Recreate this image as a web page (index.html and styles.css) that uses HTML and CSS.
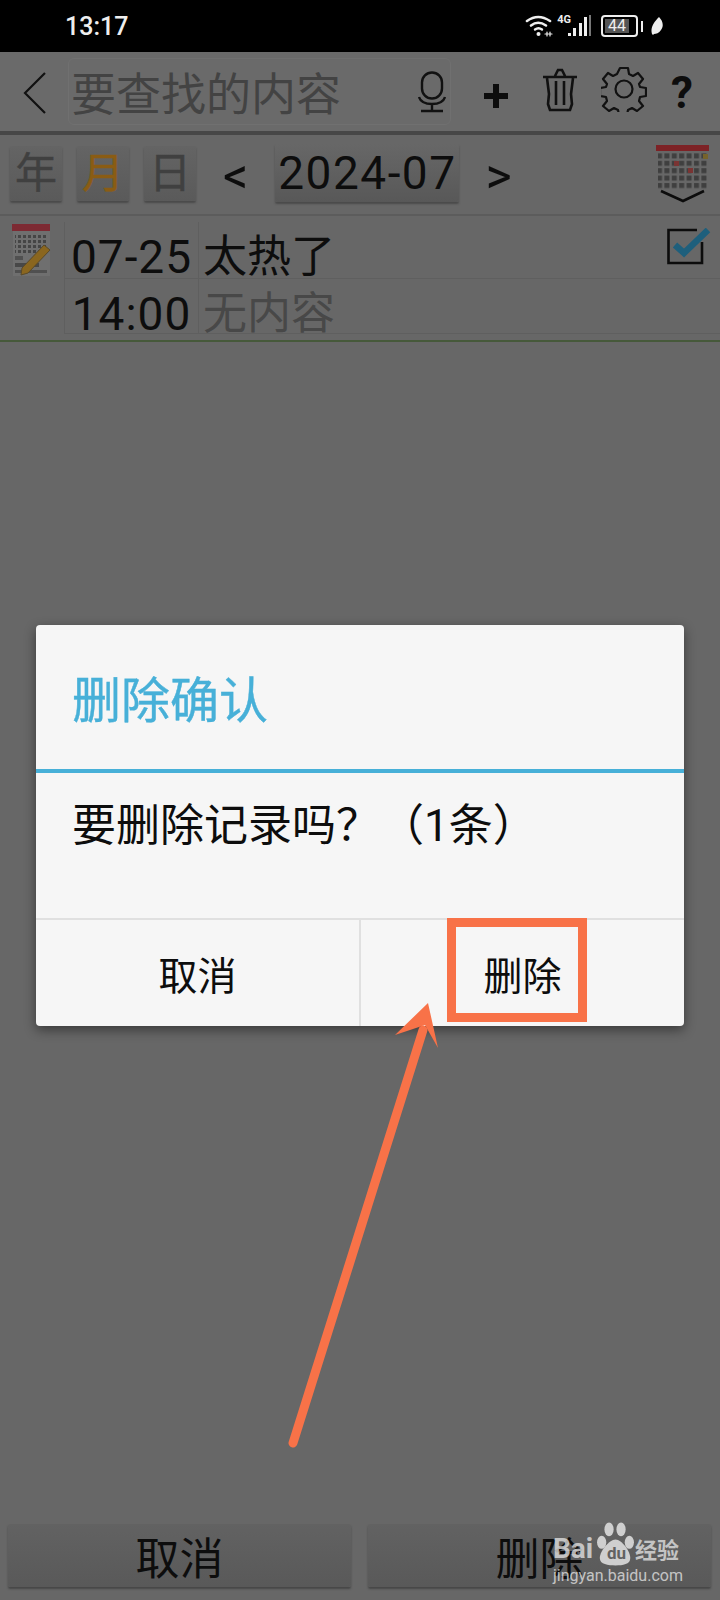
FILE: index.html
```html
<!DOCTYPE html>
<html lang="zh-CN">
<head>
    <meta charset="UTF-8">
    <meta name="viewport" content="width=device-width, initial-scale=1.0">
    <title>删除确认</title>
    <link rel="stylesheet" href="styles.css">
</head>
<body>
    <div class="page">
        <!-- Status bar -->
        <div class="status-bar">
            <span class="time">13:17</span>
            <div class="status-icons">
                <svg class="wifi" width="28" height="24" viewBox="0 0 28 24" fill="none" stroke="#eee" stroke-linecap="round">
                    <path d="M2 7 Q13 -1 25 7" stroke-width="2.6"/>
                    <path d="M6 11.500 Q13 6 21 11.500" stroke-width="2.600"/>
                    <path d="M10 15.500 Q13.500 13 17 15.500" stroke-width="2.400"/>
                    <circle cx="13.500" cy="20" r="2" fill="#eee" stroke="none"/>
                    <path d="M20 20h7M22 18v4M25 18v4" stroke-width="1.200"/>
                </svg>
                <span class="net">4G</span>
                <svg class="signal" width="24" height="24" viewBox="0 0 24 24" fill="#eee">
                    <rect x="0" y="19" width="3" height="3"/>
                    <rect x="5" y="14" width="3" height="8"/>
                    <rect x="11" y="9" width="3" height="13"/>
                    <rect x="16" y="3" width="3" height="19"/>
                    <rect x="21" y="1" width="2" height="21" fill="#777"/>
                </svg>
                <div class="battery"><span class="battery-level">44</span></div>
                <span class="battery-nub"></span>
                <svg class="leaf" width="13" height="18" viewBox="0 0 13 18" fill="#eee">
                    <path d="M8 0 C12 4 13 9 10 13 C8 16 5 17 3 17 L2 18 L1 17 C-1 11 3 5 8 0Z"/>
                </svg>
            </div>
        </div>

        <!-- Search toolbar -->
        <div class="toolbar">
            <svg class="back" width="24" height="42" viewBox="0 0 24 42" fill="none" stroke="#111" stroke-width="2.200">
                <path d="M22 1 L2 21 L22 41"/>
            </svg>
            <div class="search-box">
                <span class="search-hint">要查找的内容</span>
                <svg class="mic" width="28" height="42" viewBox="0 0 28 42" fill="none" stroke="#111" stroke-width="2.400">
                    <rect x="4" y="1.500" width="20" height="26" rx="10"/>
                    <path d="M1 26 Q3 33 14 33 Q25 33 27 26M14 33v6M3 40h22"/>
                </svg>
            </div>
            <svg class="plus" width="24" height="24" viewBox="0 0 24 24" fill="#0d0d0d">
                <path d="M9 0h6v9h9v6h-9v9H9v-9H0V9h9z"/>
            </svg>
            <svg class="trash" width="34" height="44" viewBox="0 0 34 44" fill="none" stroke="#111" stroke-width="2.600">
                <path d="M0 9h34M12 8 L15 2h4l3 6"/>
                <path d="M4 10 L6 26 L5 36 L7 42h20l2-6-1-10 2-16"/>
                <path d="M13 13v24M21 13v24"/>
            </svg>
            <svg class="gear" width="46" height="46" viewBox="0 0 46 46" fill="none" stroke="#111" stroke-width="2.200">
                <circle cx="23" cy="23" r="8.500"/>
                <path d="M19 2h8l1 6 4 2 5-3 5 6-4 5 1 3 6 1v8l-6 1-1 4 4 5-6 5-5-3-4 2-1 5h-8l-1-5-4-2-5 3-6-5 4-5-1-4-6-1v-8l6-1 1-3-4-5 5-6 5 3 4-2z" stroke-linejoin="round"/>
            </svg>
            <span class="help">?</span>
        </div>

        <!-- Period selector -->
        <div class="period-bar">
            <button class="tab">年</button>
            <button class="tab tab-active">月</button>
            <button class="tab">日</button>
            <span class="step step-prev">&lt;</span>
            <button class="month">2024-07</button>
            <span class="step step-next">&gt;</span>
            <svg class="month-grid" width="54" height="58" viewBox="0 0 54 58">
                <defs>
                    <pattern id="dots" width="7.400" height="7.400" patternUnits="userSpaceOnUse">
                        <rect x="1" y="1" width="5" height="5" fill="#3f3f3f"/>
                    </pattern>
                    <pattern id="dots-small" width="5" height="5" patternUnits="userSpaceOnUse">
                        <rect x="1" y="1" width="3" height="3" fill="#454545"/>
                    </pattern>
                </defs>
                <rect x="0" y="0" width="53" height="6" fill="#7d2226"/>
                <rect x="2" y="8" width="50" height="37" fill="url(#dots)"/>
                <rect x="18" y="16" width="5" height="5" fill="#7a3433"/>
                <rect x="32" y="23" width="5" height="5" fill="#7a3433"/>
                <rect x="47" y="9" width="5" height="5" fill="#76632c"/>
                <path d="M5 46 L27 56 L48 46" fill="none" stroke="#0c0c0c" stroke-width="2.600"/>
            </svg>
        </div>

        <!-- Record list -->
        <div class="record">
            <svg class="record-icon" width="40" height="54" viewBox="0 0 40 54">
                <rect x="1" y="1" width="37" height="51" fill="#6f6f6f"/>
                <rect x="0" y="0" width="38" height="7" fill="#7d2a33"/>
                <rect x="3" y="9" width="33" height="20" fill="url(#dots-small)"/>
                <rect x="3" y="32" width="8" height="4" fill="#505050"/>
                <rect x="3" y="39" width="24" height="4" fill="#484848"/>
                <rect x="3" y="46" width="32" height="3" fill="#505050"/>
                <path d="M10 44 L32 21 L38 26 L16 49 L9 51Z" fill="#8a661f" stroke="#5a4a2a" stroke-width="1"/>
            </svg>
            <div class="cell cell-date">07-25</div>
            <div class="cell cell-title">太热了
                <svg class="check" width="44" height="38" viewBox="0 0 44 38" fill="none">
                    <path d="M35 14 V35 H1.500 V2 H30" stroke="#0c0c0c" stroke-width="2.600"/>
                    <path d="M8 17 L17 25 L41 2" stroke="#1e5f7c" stroke-width="6.500"/>
                </svg>
            </div>
            <div class="cell cell-date cell-low">14:00</div>
            <div class="cell cell-title cell-low cell-empty">无内容</div>
        </div>

        <div class="spacer"></div>

        <!-- Bottom actions -->
        <div class="actions">
            <button class="action">取消</button>
            <button class="action">删除</button>
        </div>

        <!-- Dialog -->
        <div class="dialog">
            <h2 class="dialog-title">删除确认</h2>
            <p class="dialog-text">要删除记录吗&#xFF1F;&#xFF08;1条&#xFF09;</p>
            <div class="dialog-buttons">
                <button class="dialog-btn">取消</button>
                <button class="dialog-btn dialog-btn-right">删除</button>
            </div>
        </div>

        <!-- Annotation drawn on the screenshot -->
        <div class="mark"></div>
        <svg class="arrow" width="720" height="1600" viewBox="0 0 720 1600">
            <path d="M293 1443 L423 1030" stroke="#f87248" stroke-width="9" stroke-linecap="round"/>
            <path d="M428 1003 L438 1048 L425 1025 L395 1035Z" fill="#f87248"/>
        </svg>

        <!-- Watermark -->
        <div class="watermark">
            <div class="wm-top">
                <span class="wm-bai">Bai</span>
                <svg class="wm-paw" width="37" height="48" viewBox="0 0 40 52" fill="#cfcfcf">
                    <ellipse cx="5" cy="22" rx="5" ry="7"/>
                    <ellipse cx="13" cy="8" rx="5" ry="7.500"/>
                    <ellipse cx="26" cy="8" rx="5" ry="7.500"/>
                    <ellipse cx="35" cy="22" rx="5" ry="7"/>
                    <path d="M20 19 C27 19 36 32 36 39 C36 46 28 47 20 47 C12 47 3 46 3 39 C3 32 13 19 20 19Z"/>
                </svg>
                <span class="wm-du">du</span>
                <span class="wm-jy">经验</span>
            </div>
            <div class="wm-url">jingyan.baidu.com</div>
        </div>
    </div>
</body>
</html>
```

FILE: styles.css
```css
* {
    box-sizing: border-box;
}

body {
    margin: 0;
    font-family: Roboto, "Noto Sans CJK SC", sans-serif;
    background-color: #676767;
}

button {
    font-family: inherit;
    padding: 0;
    border: none;
}

.page {
    position: relative;
    width: 720px;
    height: 1600px;
    display: flex;
    flex-direction: column;
    overflow: hidden;
}

/* Status bar */
.status-bar {
    height: 52px;
    flex-shrink: 0;
    background: #000;
    color: #eee;
    display: flex;
    align-items: center;
    justify-content: space-between;
    padding: 0 56px 0 65px;
}

.time {
    font-size: 25px;
    font-weight: 500;
}

.status-icons {
    display: flex;
    align-items: center;
}

.net {
    font-size: 11px;
    font-weight: 700;
    margin: -14px 0 0 4px;
}

.signal {
    margin-left: -3px;
}

.battery {
    width: 37px;
    height: 22px;
    margin-left: 9px;
    border: 2px solid #eee;
    border-radius: 4px;
    padding: 2px;
    display: flex;
}

.battery-level {
    width: 24px;
    background: #555;
    font-size: 16px;
    line-height: 14px;
    white-space: nowrap;
    padding-left: 3px;
    color: #eee;
}

.battery-nub {
    width: 2px;
    height: 11px;
    margin-left: 3px;
    background: #eee;
}

.leaf {
    margin-left: 8px;
}

/* Search toolbar */
.toolbar {
    height: 83px;
    flex-shrink: 0;
    background: #6a6a6a;
    border-bottom: 4px solid #474747;
    display: flex;
    align-items: center;
    padding-left: 23px;
}

.back {
    margin-top: 2px;
}

.search-box {
    width: 383px;
    height: 67px;
    margin-left: 21px;
    padding: 0 2px 0 2px;
    border: 1px solid #707070;
    border-radius: 6px;
    display: flex;
    align-items: center;
    justify-content: space-between;
}

.search-hint {
    font-size: 45px;
    color: #434343;
}

.mic {
    margin-right: 2px;
}

.plus {
    margin: 9px 0 0 33px;
}

.trash {
    margin: -4px 0 0 35px;
}

.gear {
    margin: -6px 0 0 24px;
}

.help {
    margin: 2px 0 0 24px;
    font-size: 44px;
    font-weight: 700;
    color: #0d0d0d;
}

/* Period selector */
.period-bar {
    height: 81px;
    flex-shrink: 0;
    border-bottom: 2px solid #5c5c5c;
    display: flex;
    align-items: center;
    padding: 0 0 3px 10px;
}

.tab {
    width: 52px;
    height: 55px;
    margin-right: 15px;
    background: linear-gradient(#646464, #5a5a5a);
    color: #404040;
    font-size: 42px;
    line-height: 55px;
    -webkit-text-stroke: 0.5px currentColor;
    border-radius: 2px;
    box-shadow: 0 2px 2px #4a4a4a;
}

.tab-active {
    color: #8a5c14;
}

.step {
    margin-top: 6px;
    font-size: 50px;
    line-height: 58px;
    color: #0d0d0d;
}

.step-prev {
    margin-left: 12px;
}

.month {
    width: 184px;
    height: 58px;
    margin-left: 27px;
    background: linear-gradient(#676767, #585858);
    color: #0d0d0d;
    font-size: 46px;
    letter-spacing: 1.5px;
    line-height: 58px;
    border-radius: 2px;
    box-shadow: 0 2px 2px #4a4a4a;
}

.step-next {
    margin-left: 26px;
}

.month-grid {
    margin-left: auto;
    margin-right: 10px;
    margin-top: 2px;
}

/* Record list */
.record {
    position: relative;
    height: 126px;
    flex-shrink: 0;
    border-bottom: 2px solid #46593a;
    padding: 6px 0 0 64px;
    display: grid;
    grid-template-columns: 134px 1fr;
    grid-template-rows: 56px 56px;
    align-content: start;
}

.record-icon {
    position: absolute;
    left: 12px;
    top: 8px;
}

.cell {
    position: relative;
    font-size: 44px;
    line-height: 70px;
    color: #0d0d0d;
    border-left: 1px solid #5f5f5f;
    white-space: nowrap;
}

.cell-date {
    font-size: 46px;
    letter-spacing: 1px;
    text-align: center;
}

.cell-title {
    padding-left: 4px;
}

.cell-low {
    border-top: 1px solid #5f5f5f;
    border-bottom: 1px solid #5f5f5f;
}

.cell-empty {
    color: #484848;
}

.check {
    position: absolute;
    left: 468px;
    top: 6px;
}

.spacer {
    flex: 1;
}

/* Bottom actions */
.actions {
    height: 76px;
    flex-shrink: 0;
    display: flex;
    gap: 17px;
    padding: 0 9px 13px 8px;
}

.action {
    flex: 1;
    height: 63px;
    background: linear-gradient(#626262, #595959);
    color: #0d0d0d;
    font-size: 44px;
    border-radius: 2px;
    box-shadow: 0 2px 2px #474747;
}

/* Dialog */
.dialog {
    position: absolute;
    left: 36px;
    top: 625px;
    width: 648px;
    height: 401px;
    background: #f6f6f6;
    border-radius: 4px;
    box-shadow: 0 4px 12px rgba(0,0,0,0.45);
    display: flex;
    flex-direction: column;
}

.dialog-title {
    height: 148px;
    margin: 0;
    padding: 0 0 0 36px;
    border-bottom: 4px solid #47b0d8;
    color: #47b0d8;
    font-size: 49px;
    font-weight: 400;
    -webkit-text-stroke: 0.4px #47b0d8;
    line-height: 154px;
}

.dialog-text {
    height: 145px;
    margin: 0;
    padding: 0 0 0 36px;
    color: #0d0d0d;
    font-size: 44px;
    line-height: 106px;
    white-space: nowrap;
}

.dialog-buttons {
    flex: 1;
    display: flex;
    border-top: 2px solid #e0e0e0;
}

.dialog-btn {
    flex: 1;
    background: none;
    color: #0d0d0d;
    font-size: 39px;
}

.dialog-btn-right {
    border-left: 2px solid #e0e0e0;
}

/* Annotation */
.mark {
    position: absolute;
    left: 447px;
    top: 918px;
    width: 140px;
    height: 104px;
    border: 9px solid #f87248;
}

.arrow {
    position: absolute;
    left: 0;
    top: 0;
    pointer-events: none;
}

/* Watermark */
.watermark {
    position: absolute;
    left: 553px;
    top: 1522px;
    width: 130px;
    color: rgba(225,225,225,0.8);
}

.wm-top {
    position: relative;
    height: 42px;
}

.wm-bai {
    position: absolute;
    left: 0;
    top: 10px;
    font-size: 28px;
    line-height: 34px;
    font-weight: 700;
}

.wm-paw {
    position: absolute;
    left: 44px;
    top: 0;
}

.wm-du {
    position: absolute;
    left: 54px;
    top: 21px;
    font-size: 17px;
    line-height: 20px;
    font-weight: 700;
    color: #626262;
}

.wm-jy {
    position: absolute;
    left: 82px;
    top: 14px;
    font-size: 22px;
    line-height: 30px;
    font-weight: 700;
}

.wm-url {
    margin-top: 2px;
    font-size: 16px;
    line-height: 20px;
    white-space: nowrap;
}
```
